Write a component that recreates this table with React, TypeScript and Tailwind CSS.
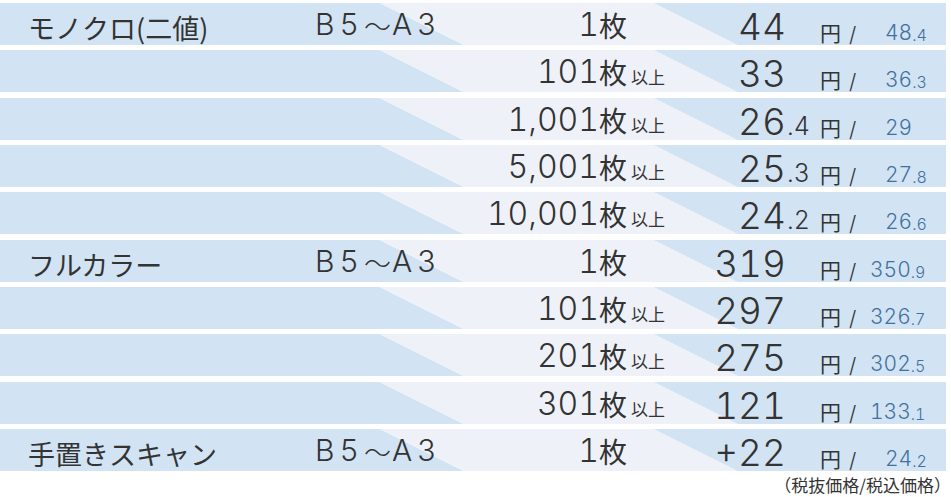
import React from "react"

interface PriceRow {
  name?: string
  qty: string
  over?: boolean
  yen: string
  yenDec?: string
  tax: string
  taxDec?: string
}

const rows: PriceRow[] = [
  { name: "モノクロ(二値)", qty: "1", yen: "44", tax: "48", taxDec: ".4" },
  { qty: "101", over: true, yen: "33", tax: "36", taxDec: ".3" },
  { qty: "1,001", over: true, yen: "26", yenDec: ".4", tax: "29" },
  { qty: "5,001", over: true, yen: "25", yenDec: ".3", tax: "27", taxDec: ".8" },
  { qty: "10,001", over: true, yen: "24", yenDec: ".2", tax: "26", taxDec: ".6" },
  { name: "フルカラー", qty: "1", yen: "319", tax: "350", taxDec: ".9" },
  { qty: "101", over: true, yen: "297", tax: "326", taxDec: ".7" },
  { qty: "201", over: true, yen: "275", tax: "302", taxDec: ".5" },
  { qty: "301", over: true, yen: "121", tax: "133", taxDec: ".1" },
  { name: "手置きスキャン", qty: "1", yen: "+22", tax: "24", taxDec: ".2" },
]

const jp = "font-['Noto_Sans_CJK_JP',sans-serif]"
const num = "font-['Inter','Noto_Sans_CJK_JP',sans-serif] font-light tabular-nums"

function Row({ row }: { row: PriceRow }) {
  return (
    <div className="flex h-[42px] w-[946px] items-end bg-[linear-gradient(26.565deg,#d2e3f4_207px,#eef2f8_207px,#eef2f8_330px,#d2e3f4_330px)] text-[#333333]">
      {/* category */}
      <div className={`w-[315px] pb-[4px] pl-[28px] text-[27px] leading-none ${jp}`}>{row.name}</div>

      {/* paper size */}
      <div className={`flex w-[155px] items-end pb-[6px] text-[30px] leading-none ${num}`}>
        {row.name && (
          <>
            <span className="tracking-[5px]">B5</span>
            <span className={`text-[27px] ${jp}`}>〜</span>
            <span className="pl-[1px] tracking-[5px]">A3</span>
          </>
        )}
      </div>

      {/* quantity */}
      <div className="flex w-[157px] items-end justify-end">
        <span className={`pb-[4px] text-[32px] leading-none ${num}`}>{row.qty}</span>
        <span className={`pb-[6px] text-[28px] leading-none ${jp}`}>枚</span>
      </div>
      <div className={`w-[53px] pb-[7px] pl-[4px] text-[17px] leading-none ${jp}`}>{row.over ? "以上" : ""}</div>

      {/* price excl. tax */}
      <div className={`w-[106px] text-right text-[37px] leading-none ${num}`}>{row.yen}</div>
      <div className={`w-[34px] pb-[1px] pl-[1px] text-[25px] leading-none ${num}`}>{row.yenDec}</div>
      <div className={`w-[25px] pb-[2px] text-[21px] leading-none ${jp}`}>円</div>
      <div className={`w-[15px] pl-[4px] text-[21px] leading-none ${num}`}>/</div>

      {/* price incl. tax */}
      <div
        className={`flex flex-1 items-end text-[#4271a0] ${num} ${
          row.tax.length > 2 ? "pl-[10px]" : "pl-[25px]"
        }`}
      >
        <span className="pb-[2px] text-[21px] leading-none">{row.tax}</span>
        <span className="pb-[2px] text-[16px] leading-none">{row.taxDec}</span>
      </div>
    </div>
  )
}

export default function App() {
  return (
    <div className="h-[497px] w-[951px] overflow-hidden bg-white pt-[3px]">
      <div className="flex flex-col gap-[5.33px]">
        {rows.map((r, i) => (
          <Row key={i} row={r} />
        ))}
      </div>
      <div className={`flex justify-end pt-[5px] text-[17px] leading-none text-[#333333] ${jp}`}>
        <span>（税抜価格/税込価格）</span>
      </div>
    </div>
  )
}
